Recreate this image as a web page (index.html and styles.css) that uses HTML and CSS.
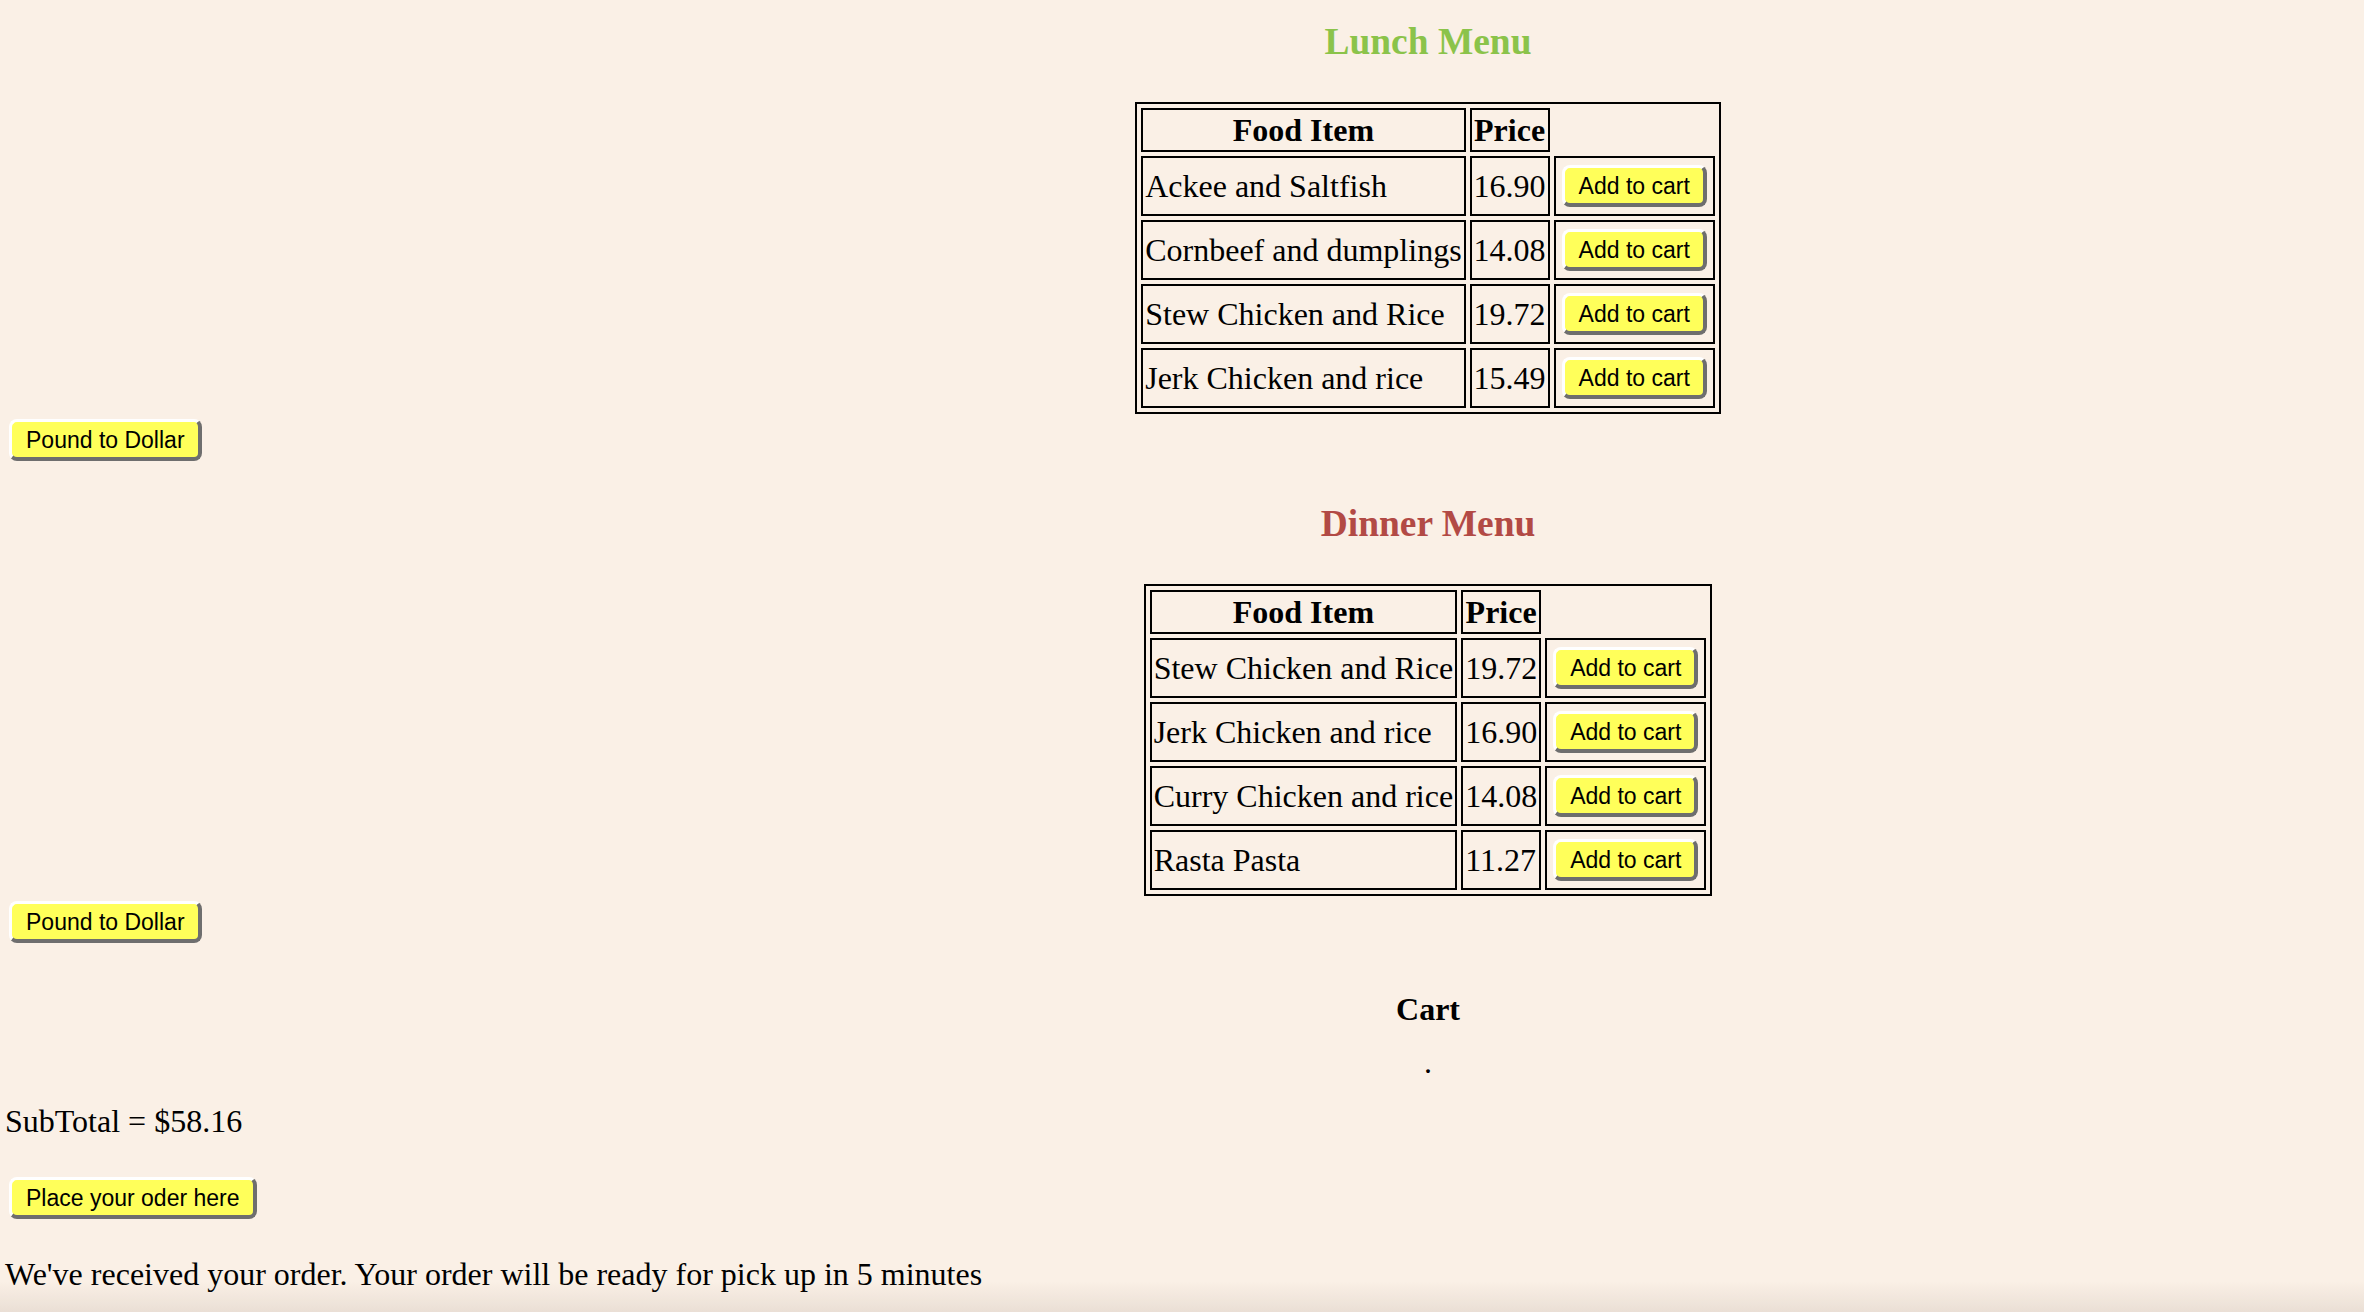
FILE: index.html
```html
<!DOCTYPE html>
<html lang="en">
<head>
<meta charset="utf-8">
<title>Menu</title>
<link rel="stylesheet" href="styles.css">
</head>
<body>
  <section class="menu menu-lunch">
    <h3 class="menu-title lunch">Lunch Menu</h3>
    <table class="menu-table">
      <tr><th>Food Item</th><th>Price</th></tr>
      <tr><td>Ackee and Saltfish</td><td>16.90</td><td class="action"><button class="btn btn-cell">Add to cart</button></td></tr>
      <tr><td>Cornbeef and dumplings</td><td>14.08</td><td class="action"><button class="btn btn-cell">Add to cart</button></td></tr>
      <tr><td>Stew Chicken and Rice</td><td>19.72</td><td class="action"><button class="btn btn-cell">Add to cart</button></td></tr>
      <tr><td>Jerk Chicken and rice</td><td>15.49</td><td class="action"><button class="btn btn-cell">Add to cart</button></td></tr>
    </table>
  </section>
  <button class="btn btn-block">Pound to Dollar</button>

  <section class="menu menu-dinner">
    <h3 class="menu-title dinner">Dinner Menu</h3>
    <table class="menu-table">
      <tr><th>Food Item</th><th>Price</th></tr>
      <tr><td>Stew Chicken and Rice</td><td>19.72</td><td class="action"><button class="btn btn-cell">Add to cart</button></td></tr>
      <tr><td>Jerk Chicken and rice</td><td>16.90</td><td class="action"><button class="btn btn-cell">Add to cart</button></td></tr>
      <tr><td>Curry Chicken and rice</td><td>14.08</td><td class="action"><button class="btn btn-cell">Add to cart</button></td></tr>
      <tr><td>Rasta Pasta</td><td>11.27</td><td class="action"><button class="btn btn-cell">Add to cart</button></td></tr>
    </table>
  </section>
  <button class="btn btn-block">Pound to Dollar</button>

  <section class="cart">
    <h4 class="cart-title">Cart</h4>
    <div class="cart-items">.</div>
  </section>
  <p class="subtotal">SubTotal = $58.16</p>
  <button class="btn btn-block btn-order">Place your oder here</button>
  <p class="message">We've received your order. Your order will be ready for pick up in 5 minutes</p>

  <div class="bottom-fade"></div>
</body>
</html>
```

FILE: styles.css
```css
html, body {
  margin: 0;
  background: #faf0e6;
}

body {
  padding: 20px 0 0 5px;
  font-family: "Liberation Serif", "Times New Roman", serif;
  font-size: 32px;
  line-height: 37px;
  color: #000;
  overflow: hidden;
}

.menu,
.cart {
  margin-left: 487px;
  text-align: center;
}

.menu-dinner {
  margin-top: 41px;
}

.menu-title {
  margin: 0 0 39px;
  font-size: 37.44px;
  line-height: 43px;
  font-weight: bold;
}

.menu-title.lunch { color: #8bc34a; }
.menu-title.dinner { color: #b24a45; }

.menu-table {
  margin: 0 auto;
  border: 2px solid #000;
  border-collapse: separate;
  border-spacing: 4px;
}

.menu-table th,
.menu-table td {
  border: 2px solid #000;
  padding: 2px;
}

.menu-table th {
  line-height: 36px;
  font-weight: bold;
  text-align: center;
}

.menu-table td {
  text-align: left;
  white-space: nowrap;
}

.menu-table td.action {
  font-size: 0;
  line-height: 0;
}

.btn {
  font-family: "Liberation Sans", Arial, Helvetica, sans-serif;
  font-size: 23px;
  line-height: 27px;
  color: #000;
  background: #ffff5a;
  padding: 5px 13px 3px 14px;
  border-style: solid;
  border-width: 3px 4px 4px 3px;
  border-color: #ffffff #6e6e6e #6e6e6e #ffffff;
  border-radius: 8px;
  white-space: nowrap;
  cursor: pointer;
}

.btn-cell {
  display: inline-block;
  margin: 5px 4px;
  vertical-align: top;
}

.btn-block {
  display: block;
  margin: 5px 4px 4px;
}

.cart {
  margin-top: 48px;
}

.cart-title {
  margin: 0;
  font-size: 32px;
  line-height: 37px;
  font-weight: bold;
}

.cart-items {
  margin-top: 16px;
}

.subtotal {
  margin: 22px 0 0;
}

.btn-order {
  margin-top: 37px;
}

.message {
  margin: 37px 0 0;
}

.bottom-fade {
  position: fixed;
  left: 0;
  right: 0;
  bottom: 0;
  height: 30px;
  pointer-events: none;
  background: linear-gradient(to bottom, rgba(120, 100, 90, 0), rgba(120, 100, 90, 0.12));
}
```
